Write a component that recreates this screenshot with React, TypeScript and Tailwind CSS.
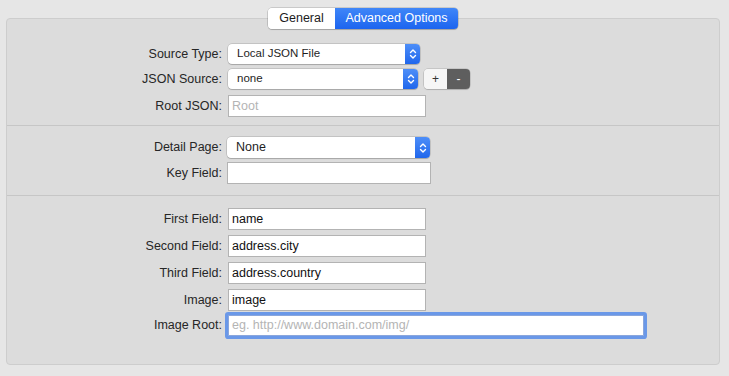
import { ReactNode } from 'react';

const font = { fontFamily: '"Liberation Sans", Arial, sans-serif' };

function Label({ children }: { children: ReactNode }) {
  return <div className="w-[221px] shrink-0 text-right pr-[6px] text-[12.5px] text-[#262626]">{children}</div>;
}

function Chevrons() {
  return (
    <svg width="8" height="12" viewBox="0 0 8 12" fill="none" stroke="white" strokeWidth="1.4" strokeLinecap="round" strokeLinejoin="round">
      <path d="M1.5 4.5 L4 2 L6.5 4.5" />
      <path d="M1.5 7.5 L4 10 L6.5 7.5" />
    </svg>
  );
}

function Select({ value, width, h = 'h-[20px]', text = 'text-[11.5px]' }: { value: string; width: string; h?: string; text?: string }) {
  return (
    <div className={`${width} ${h} flex rounded-[4px] bg-white shadow-[0_0_0_0.5px_rgba(0,0,0,0.22),0_1px_1px_rgba(0,0,0,0.15)] overflow-hidden`}>
      <div className={`flex-1 flex items-center pl-[9px] ${text} text-[#1e1e1e]`}>{value}</div>
      <div className="w-[15px] flex items-center justify-center bg-gradient-to-b from-[#4d8ef8] to-[#1f66ec]">
        <Chevrons />
      </div>
    </div>
  );
}

function Input({ value, placeholder, width = 'w-[198px]' }: { value?: string; placeholder?: string; width?: string }) {
  return (
    <div className={`${width} h-[22px] bg-white border border-[#b3b3b3] flex items-center pl-[3px] text-[12.5px]`}>
      {value ? <span className="text-[#111]">{value}</span> : <span className="text-[#b4b4b4]">{placeholder}</span>}
    </div>
  );
}

function Row({ label, children, mt = 'mt-[5px]' }: { label: string; children: ReactNode; mt?: string }) {
  return (
    <div className={`flex items-center ${mt}`}>
      <Label>{label}</Label>
      {children}
    </div>
  );
}

export default function App() {
  return (
    <div className="w-[729px] h-[376px] bg-[#e6e6e6] relative pt-[18px] px-[6px]" style={font}>
      {/* Segmented tabs */}
      <div className="absolute left-[268px] top-[8px] flex h-[21px] rounded-[4px] overflow-hidden shadow-[0_0_0_0.5px_rgba(0,0,0,0.25),0_1px_1px_rgba(0,0,0,0.15)] text-[12.5px] z-10">
        <div className="w-[67px] bg-white flex items-center justify-center text-[#1c1c1c]">General</div>
        <div className="w-[123px] bg-gradient-to-b from-[#3f86f8] to-[#1c64ef] flex items-center justify-center text-white">Advanced Options</div>
      </div>

      <div className="w-[714px] h-[347px] rounded-[4px] bg-[#dcdcdc] border border-[#cdcdcd] pt-[25px]">
        <Row label="Source Type:" mt="mt-0">
          <Select value="Local JSON File" width="w-[192px]" />
        </Row>
        <Row label="JSON Source:">
          <Select value="none" width="w-[190px]" />
          <div className="ml-[6px] flex h-[20px] rounded-[4px] overflow-hidden shadow-[0_0_0_0.5px_rgba(0,0,0,0.2),0_1px_1px_rgba(0,0,0,0.12)] text-[12px]">
            <div className="w-[23px] bg-[#f6f6f6] flex items-center justify-center text-[#333]">+</div>
            <div className="w-[23px] bg-[#5e5e5e] flex items-center justify-center text-white">-</div>
          </div>
        </Row>
        <Row label="Root JSON:" mt="mt-[6px]">
          <Input placeholder="Root" />
        </Row>

        <div className="h-px bg-[#c6c6c6] mt-[8px]" />

        <Row label="Detail Page:" mt="mt-[11px]">
          <div className="-ml-px">
            <Select value="None" width="w-[203px]" h="h-[21px]" text="text-[12.5px]" />
          </div>
        </Row>
        <Row label="Key Field:" mt="mt-[4px]">
          <div className="-ml-px">
            <Input width="w-[204px]" />
          </div>
        </Row>

        <div className="h-px bg-[#c6c6c6] mt-[11px]" />

        <Row label="First Field:" mt="mt-[12px]">
          <Input value="name" />
        </Row>
        <Row label="Second Field:">
          <Input value="address.city" />
        </Row>
        <Row label="Third Field:">
          <Input value="address.country" />
        </Row>
        <Row label="Image:">
          <Input value="image" />
        </Row>
        <Row label="Image Root:" mt="mt-[4px]">
          <div className="w-[416px] h-[21px] bg-white border border-[#8aa6dc] ring-[3px] ring-[#6a98e8] rounded-[1px] flex items-center pl-[3px] text-[12.5px] text-[#b4b4b4]">
            eg. http://www.domain.com/img/
          </div>
        </Row>
      </div>
    </div>
  );
}
